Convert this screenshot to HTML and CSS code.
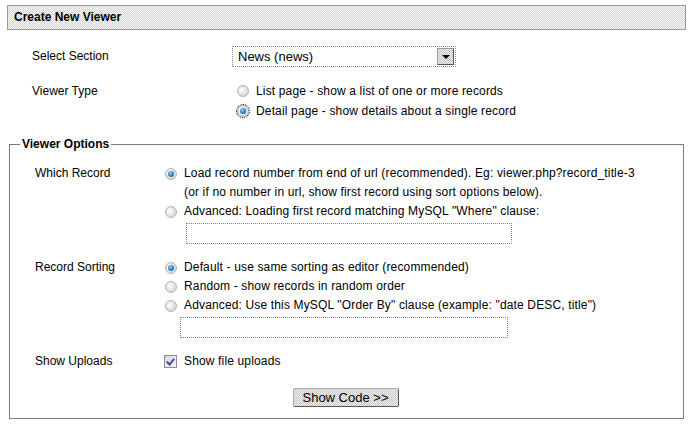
FILE: index.html
```html
<!doctype html>
<html lang="en">

<head>
    <meta charset="UTF-8" />
    <title>Create New Viewer</title>
    <link rel="stylesheet" href="styles.css">
</head>

<body>
    <div class="header">Create New Viewer</div>

    <form id="viewer-form">
        <div class="top-grid">
            <div class="label">Select Section</div>
            <div class="value">
                <span class="select-wrap">
                    <select id="section">
                        <option>News (news)</option>
                    </select>
                    <span class="select-arrow"></span>
                </span>
            </div>

            <div class="label type-label">Viewer Type</div>
            <div class="value type-value">
                <label class="opt"><input type="radio" name="type" /> List page - show a list of one or more records</label>
                <label class="opt"><input type="radio" name="type" class="focused" checked /> Detail page - show details about a single record</label>
            </div>
        </div>

        <fieldset class="options">
            <legend>Viewer Options</legend>

            <div class="opt-grid">
                <div class="label">Which Record</div>
                <div class="value">
                    <label class="opt"><input type="radio" name="which" checked /> Load record number from end of url (recommended). Eg: viewer.php?record_title-3</label>
                    <div class="opt note">(or if no number in url, show first record using sort options below).</div>
                    <label class="opt"><input type="radio" name="which" /> Advanced: Loading first record matching MySQL "Where" clause:</label>
                    <input type="text" class="text-box where-box" />
                </div>

                <div class="label">Record Sorting</div>
                <div class="value">
                    <label class="opt"><input type="radio" name="sort" checked /> Default - use same sorting as editor (recommended)</label>
                    <label class="opt"><input type="radio" name="sort" /> Random - show records in random order</label>
                    <label class="opt"><input type="radio" name="sort" /> Advanced: Use this MySQL "Order By" clause (example: "date DESC, title")</label>
                    <input type="text" class="text-box order-box" />
                </div>

                <div class="label">Show Uploads</div>
                <div class="value">
                    <label class="opt"><input type="checkbox" checked /> Show file uploads</label>
                </div>
            </div>

            <div class="buttons">
                <button type="button" id="show-code">Show Code &gt;&gt;</button>
            </div>
        </fieldset>
    </form>
</body>

</html>
```

FILE: styles.css
```css
body {
    font-family: "Liberation Sans", Arial, sans-serif;
    font-size: 12px;
    color: #000;
    margin: 0;
    padding: 5px 5px 0 7px;
}

.header {
    height: 23px;
    line-height: 23px;
    padding-left: 6px;
    font-weight: bold;
    border: 1px solid #9a9a9a;
    background: repeating-conic-gradient(#d6d6d6 0 25%, #f6f6f6 0 50%) 0 0 / 2px 2px;
}

.top-grid {
    display: grid;
    grid-template-columns: 200px 1fr;
    margin: 16px 0 0 25px;
}

.top-grid .label {
    line-height: 21px;
}

.type-label {
    margin-top: 14px;
}

.type-value {
    margin-top: 14px;
    padding-left: 5px;
}

.type-value .opt {
    line-height: 20px;
}

.select-wrap {
    position: relative;
    display: inline-block;
}

.select-wrap select {
    appearance: none;
    width: 224px;
    height: 21px;
    padding: 0 0 0 5px;
    border: 1px dotted #888;
    background: #fff;
    font-family: "Liberation Sans", Arial, sans-serif;
    font-size: 13px;
    color: #000;
}

.select-arrow {
    position: absolute;
    right: 2px;
    top: 2px;
    width: 15px;
    height: 15px;
    border: 1px solid #555;
    border-left-color: #999;
    border-top-color: #999;
    background: repeating-conic-gradient(#c4c4c4 0 25%, #f0f0f0 0 50%) 0 0 / 2px 2px;
    pointer-events: none;
}

.select-arrow::after {
    content: "";
    position: absolute;
    left: 4px;
    top: 6px;
    border-left: 4px solid transparent;
    border-right: 4px solid transparent;
    border-top: 4px solid #000;
}

.opt {
    display: flex;
    align-items: center;
    line-height: 19px;
    white-space: nowrap;
    letter-spacing: 0.15px;
}

.opt input {
    margin: 0 7px 0 0;
}

input[type="radio"] {
    appearance: none;
    width: 12px;
    height: 12px;
    border-radius: 50%;
    border: 1px solid #b4b4b4;
    background: radial-gradient(circle at 40% 40%, #fff 0, #e6e6e6 45%, #c8c8c8 100%);
    position: relative;
    flex: none;
}

input[type="radio"]:checked::after {
    content: "";
    position: absolute;
    left: 2px;
    top: 2px;
    width: 6px;
    height: 6px;
    border-radius: 50%;
    background: radial-gradient(circle at 40% 35%, #9fd3f5 0, #2a86c8 50%, #0b4f8a 100%);
}

input[type="radio"].focused {
    outline: 1px dotted #000;
    outline-offset: 0;
}

input[type="checkbox"] {
    appearance: none;
    width: 13px;
    height: 13px;
    border: 1px solid #8f8f8f;
    background: linear-gradient(135deg, #d6d6d6, #f6f6f6);
    position: relative;
    flex: none;
    margin-left: -1px;
}

input[type="checkbox"]:checked::after {
    content: "";
    position: absolute;
    left: 3px;
    top: 1px;
    width: 3px;
    height: 6px;
    border: solid #3a4fa8;
    border-width: 0 2px 2px 0;
    transform: rotate(40deg);
}

.options {
    margin: 16px 2px 0 2px;
    padding: 0 0 11px 10px;
    border: 1px solid #7a7a7a;
    min-width: 0;
}

.options legend {
    font-weight: bold;
    padding: 0 2px;
}

.opt-grid {
    display: grid;
    grid-template-columns: 130px 1fr;
    row-gap: 14px;
    margin-top: 13px;
    padding-left: 15px;
}

.opt-grid .label {
    line-height: 19px;
}

.note {
    padding-left: 19px;
}

.text-box {
    display: block;
    height: 21px;
    box-sizing: border-box;
    border: 1px dotted #888;
    padding: 0 3px;
    margin-top: 2px;
}

.where-box {
    width: 326px;
    margin-left: 21px;
}

.order-box {
    width: 328px;
    margin-left: 15px;
}

.buttons {
    text-align: center;
    margin-top: 17px;
    padding-right: 12px;
}

.buttons button {
    height: 19px;
    width: 106px;
    padding: 0;
    font-family: "Liberation Sans", Arial, sans-serif;
    font-size: 13px;
    color: #000;
    border: 1px solid #555;
    border-top-color: #aaa;
    border-left-color: #aaa;
    border-radius: 2px;
    background: repeating-conic-gradient(#c6c6c6 0 25%, #f0f0f0 0 50%) 0 0 / 2px 2px;
    cursor: pointer;
}
```
